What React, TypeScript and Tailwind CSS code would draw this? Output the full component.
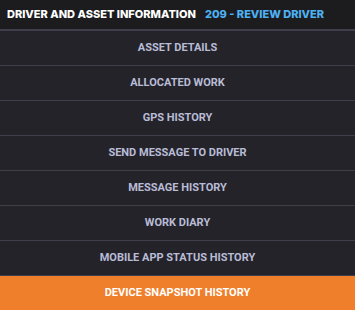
const items = [
  "ASSET DETAILS",
  "ALLOCATED WORK",
  "GPS HISTORY",
  "SEND MESSAGE TO DRIVER",
  "MESSAGE HISTORY",
  "WORK DIARY",
  "MOBILE APP STATUS HISTORY",
];

export default function App() {
  return (
    <div className="w-[355px] h-[310px] bg-[#24232a] overflow-hidden">
      {/* Header */}
      <div className="flex h-[31px] items-center gap-[9px] whitespace-nowrap bg-[#1c1c1e] px-[7px] border-b-2 border-[#3f3e4a] font-['Inter',sans-serif] text-[11px] font-extrabold">
        <span className="text-white">DRIVER AND ASSET INFORMATION</span>
        <span className="text-[#4db0f2]">209 - REVIEW DRIVER</span>
      </div>

      {items.map((label) => (
        <div
          key={label}
          className="flex h-[35px] items-center justify-center border-b border-[#3f3e4a] font-['Roboto',sans-serif] text-[11px] font-bold text-[#b9bcd6]"
        >
          {label}
        </div>
      ))}

      <div className="flex h-[34px] items-center justify-center bg-[#f07f2b] font-['Roboto',sans-serif] text-[11px] font-bold text-white">
        DEVICE SNAPSHOT HISTORY
      </div>
    </div>
  );
}
